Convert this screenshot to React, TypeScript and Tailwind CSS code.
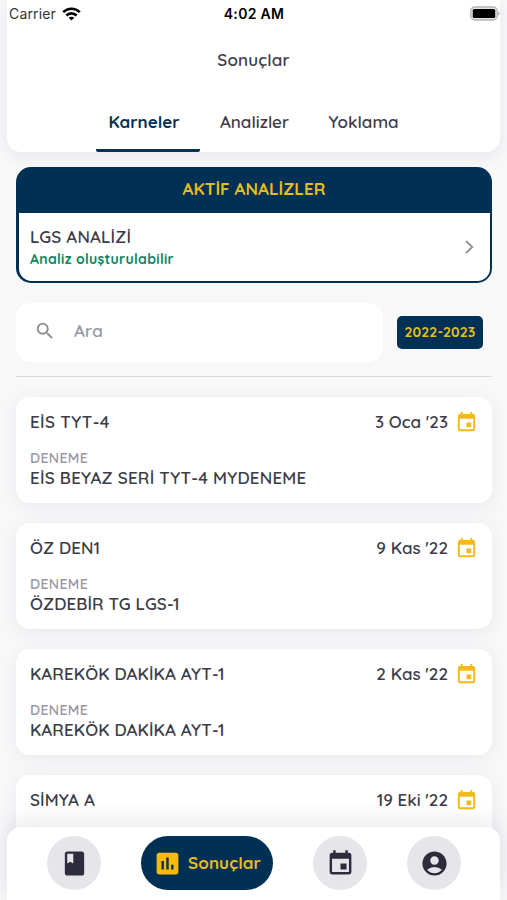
import { MdAccountCircle, MdAssessment, MdBook, MdEvent, MdSearch } from 'react-icons/md';
import clsx from 'clsx';

interface Exam {
    title: string;
    name: string;
    date: string;
    wide?: boolean;
}

const exams: Exam[] = [
    { title: 'EİS TYT-4', name: 'EİS BEYAZ SERİ TYT-4 MYDENEME', date: "3 Oca '23", wide: true },
    { title: 'ÖZ DEN1', name: 'ÖZDEBİR TG LGS-1', date: "9 Kas '22" },
    { title: 'KAREKÖK DAKİKA AYT-1', name: 'KAREKÖK DAKİKA AYT-1', date: "2 Kas '22" },
    { title: 'SİMYA A', name: 'SİMYA A', date: "19 Eki '22" },
];

function StatusBar() {
    return (
        <div className="grid h-[27px] grid-cols-3 items-center pl-[2px] font-[Inter,sans-serif] text-black">
            <div className="flex items-center gap-[6px]">
                <span className="text-[14px] tracking-[0.15px] text-[#333]">Carrier</span>
                <svg width="19" height="14" viewBox="0 0 19 14" fill="none" stroke="black" strokeWidth="2.6">
                    <path d="M1.2 5.2C5.8.6 13.2.6 17.8 5.2" />
                    <path d="M4.3 8.5C7.3 5.6 11.7 5.6 14.7 8.5" />
                    <path d="M9.5 13.6 6.7 10.7C8.3 9.3 10.7 9.3 12.3 10.7Z" fill="black" stroke="none" />
                </svg>
            </div>
            <span className="-ml-px text-center text-[14px] font-semibold tracking-[0.3px]">4:02 AM</span>
            <svg className="justify-self-end" width="31" height="16" viewBox="0 0 31 16">
                <rect x="1.75" y="1" width="26.5" height="13" rx="4" fill="#e4e4e4" stroke="#b5b5b5" strokeWidth="1.3" />
                <rect x="3.75" y="3" width="22.5" height="9" rx="1.5" fill="black" />
                <path d="M29.3 5.5c2 .7 2 3.3 0 4z" fill="#b5b5b5" />
            </svg>
        </div>
    );
}

function Header() {
    const tab = 'h-[42px] text-center font-semibold whitespace-nowrap';

    return (
        <header className="relative z-10 mx-[7px] flex h-[152px] flex-col rounded-b-[14px] bg-white shadow-[0_4px_16px_rgba(60,60,120,0.09)]">
            <StatusBar />
            <h1 className="mt-[21px] text-center text-[17px] leading-6 font-semibold tracking-[0.15px]">Sonuçlar</h1>
            <nav className="mt-auto flex pl-[89px] text-[17px] leading-6">
                <a className="h-[42px] w-[104px] rounded-b-xs border-b-[3px] border-[#043257] pr-2 text-center font-bold text-[#043257]">
                    Karneler
                </a>
                <a className={clsx(tab, 'ml-[19px] w-[71px]')}>Analizler</a>
                <a className={clsx(tab, 'ml-[38px] w-[71px]')}>Yoklama</a>
            </nav>
        </header>
    );
}

function ActiveAnalyses() {
    return (
        <section className="h-[116px] rounded-[15px] bg-[#003054] px-[2.5px] pb-[2.5px]">
            <h2 className="h-[46px] text-center text-[17px] leading-[43px] font-bold tracking-[0.05px] text-[#e6bd20]">
                AKTİF ANALİZLER
            </h2>
            <div className="flex h-[67.5px] items-start justify-between rounded-b-[12.5px] bg-white pt-3 pr-4 pl-[11.5px]">
                <div>
                    <p className="text-[17px] leading-[23px] font-semibold tracking-[0.15px]">LGS ANALİZİ</p>
                    <p className="text-[14px] leading-[23px] font-bold tracking-[0.3px] text-[#0a8560]">
                        Analiz oluşturulabilir
                    </p>
                </div>
                <svg className="mt-[15px]" width="9" height="14" viewBox="0 0 9 14" fill="none" stroke="#929298" strokeWidth="1.8">
                    <path d="M1 1l6.3 6L1 13" />
                </svg>
            </div>
        </section>
    );
}

function ExamCard({ exam }: { exam: Exam }) {
    return (
        <article className="h-[106px] shrink-0 rounded-[14px] bg-white px-[14px] pt-[13px] shadow-[0_3px_18px_rgba(60,60,110,0.08)]">
            <div className="flex h-6 items-center justify-between text-[17px] font-semibold">
                <span className={exam.wide ? 'tracking-[0.35px]' : 'tracking-[0.1px]'}>{exam.title}</span>
                <span className="flex items-center gap-[7px]">
                    {exam.date}
                    <MdEvent size={23} className="text-[#f6b91b]" />
                </span>
            </div>
            <p className="mt-[15px] text-[14px] leading-[18px] font-semibold tracking-[0.4px] text-[#9696a4]">DENEME</p>
            <p
                className={clsx(
                    'text-[17px] leading-[22px] font-semibold',
                    exam.wide ? 'tracking-[0.22px]' : 'tracking-[0.1px]'
                )}
            >
                {exam.name}
            </p>
        </article>
    );
}

function BottomNav() {
    const circle = 'flex size-[54px] items-center justify-center rounded-full bg-[#e6e5ea] text-[#2d2c3d]';

    return (
        <nav className="absolute inset-x-[7px] bottom-0 flex h-[73px] gap-10 rounded-t-[14px] bg-white pt-[9px] pl-10 shadow-[0_-4px_22px_rgba(60,60,110,0.13)]">
            <button className={circle}>
                <MdBook size={29} />
            </button>
            <button className="flex h-[54px] w-[132px] items-center justify-center gap-[6px] rounded-full bg-[#003054] text-[17px] font-bold tracking-[0.1px] text-[#e6bd20]">
                <MdAssessment size={29} className="text-[#fabb08]" />
                Sonuçlar
            </button>
            <button className={circle}>
                <MdEvent size={29} />
            </button>
            <button className={circle}>
                <MdAccountCircle size={29} />
            </button>
        </nav>
    );
}

export default function App() {
    return (
        <div className="relative h-[900px] w-[507px] overflow-hidden bg-[#f8f8f9] font-[Quicksand,Lato,sans-serif] text-[#3d3c48]">
            <Header />
            <main className="px-4 pt-[15px] pr-[15px]">
                <ActiveAnalyses />
                <div className="mt-5 flex items-center gap-[14px]">
                    <div className="flex h-[59px] w-[367px] items-center gap-[18px] rounded-[15px] bg-white pb-[3px] pl-[18px] text-[17px] font-semibold text-[#9696a4]">
                        <MdSearch size={22} className="text-[#8c8c91]" />
                        <span className="tracking-[0.2px]">Ara</span>
                    </div>
                    <button className="h-[33px] w-[86px] rounded-[5px] bg-[#003054] text-[14px] font-bold tracking-[0.1px] text-[#e6bd20]">
                        2022-2023
                    </button>
                </div>
                <hr className="mt-[14px] border-t-[1.5px] border-[#dcdcdf]" />
                <div className="mt-5 flex flex-col gap-5">
                    {exams.map((exam) => (
                        <ExamCard key={exam.title} exam={exam} />
                    ))}
                </div>
            </main>
            <BottomNav />
        </div>
    );
}
